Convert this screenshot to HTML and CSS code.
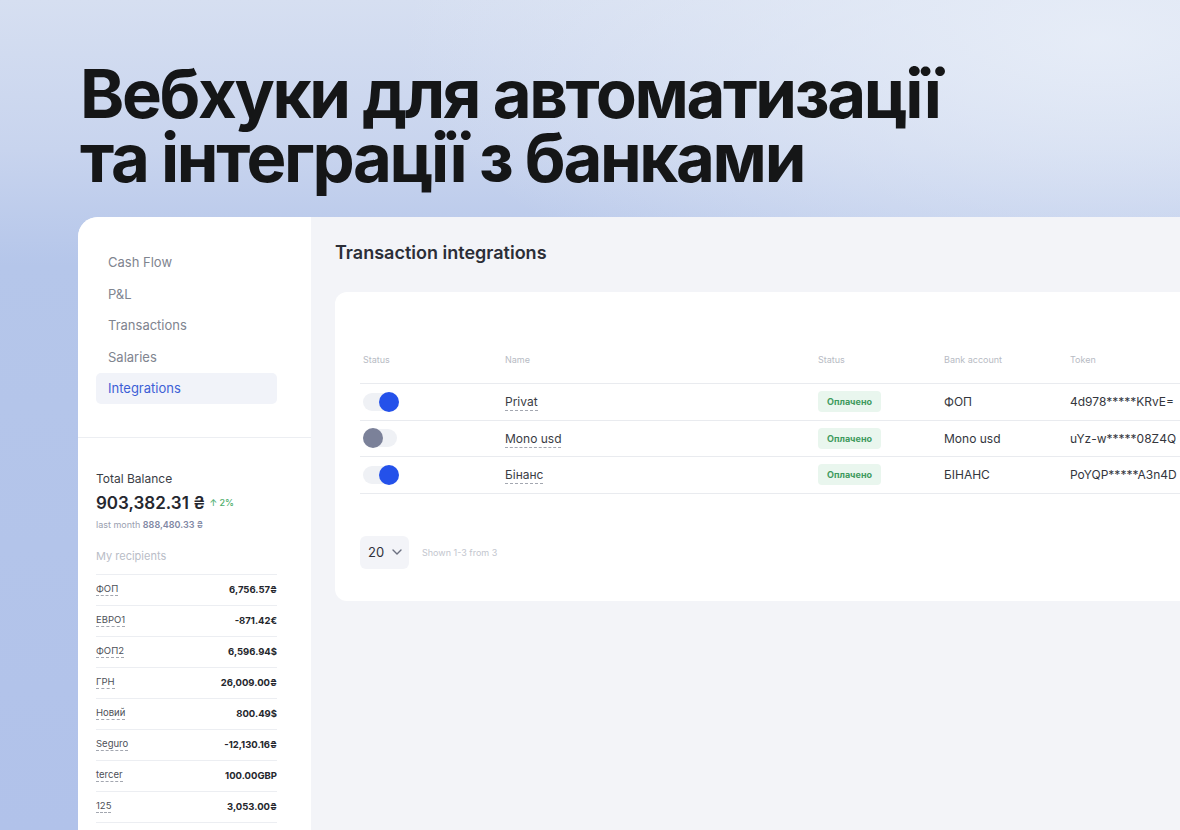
FILE: index.html
```html
<!DOCTYPE html>
<html lang="uk">
<head>
    <meta charset="UTF-8">
    <meta name="viewport" content="width=device-width, initial-scale=1.0">
    <title>Вебхуки</title>
    <link rel="stylesheet" href="styles.css">
</head>
<body>
<h1 class="headline">Вебхуки для автоматизації<br>та інтеграції з банками</h1>

<div class="app">
    <aside class="sidebar">
        <nav class="nav">
            <a class="nav-item">Cash Flow</a>
            <a class="nav-item">P&amp;L</a>
            <a class="nav-item">Transactions</a>
            <a class="nav-item">Salaries</a>
            <a class="nav-item active">Integrations</a>
        </nav>

        <div class="balance">
            <p class="balance-label">Total Balance</p>
            <p class="balance-sum">903,382.31 ₴ <span class="growth">↑ 2%</span></p>
            <p class="balance-prev">last month <b>888,480.33 ₴</b></p>
            <p class="recipients-title">My recipients</p>

            <ul class="recipients">
                <li><span class="dotted">ФОП</span><b>6,756.57₴</b></li>
                <li><span class="dotted">ЕВРО1</span><b>-871.42€</b></li>
                <li><span class="dotted">ФОП2</span><b>6,596.94$</b></li>
                <li><span class="dotted">ГРН</span><b>26,009.00₴</b></li>
                <li><span class="dotted">Новий</span><b>800.49$</b></li>
                <li><span class="dotted">Seguro</span><b>-12,130.16₴</b></li>
                <li><span class="dotted">tercer</span><b>100.00GBP</b></li>
                <li><span class="dotted">125</span><b>3,053.00₴</b></li>
                <li></li>
            </ul>
        </div>
    </aside>

    <main class="main">
        <h2 class="page-title">Transaction integrations</h2>

        <div class="table-card">
            <table class="table">
                <thead>
                <tr>
                    <th class="col-toggle">Status</th>
                    <th class="col-name">Name</th>
                    <th class="col-status">Status</th>
                    <th class="col-bank">Bank account</th>
                    <th>Token</th>
                </tr>
                </thead>
                <tbody>
                <tr>
                    <td><span class="toggle on"></span></td>
                    <td><span class="dotted name">Privat</span></td>
                    <td><span class="badge">Оплачено</span></td>
                    <td>ФОП</td>
                    <td>4d978*****KRvE=</td>
                </tr>
                <tr>
                    <td><span class="toggle"></span></td>
                    <td><span class="dotted name">Mono usd</span></td>
                    <td><span class="badge">Оплачено</span></td>
                    <td>Mono usd</td>
                    <td>uYz-w*****08Z4Q</td>
                </tr>
                <tr>
                    <td><span class="toggle on"></span></td>
                    <td><span class="dotted name">Бінанс</span></td>
                    <td><span class="badge">Оплачено</span></td>
                    <td>БІНАНС</td>
                    <td>PoYQP*****A3n4D</td>
                </tr>
                </tbody>
            </table>

            <div class="pager">
                <div class="per-page">
                    20
                    <svg width="10" height="6" viewBox="0 0 10 6"><path d="M1 1l4 4 4-4" fill="none" stroke="#6b7080" stroke-width="1.4" stroke-linecap="round" stroke-linejoin="round"/></svg>
                </div>
                <span class="shown">Shown 1-3 from 3</span>
            </div>
        </div>
    </main>
</div>
</body>
</html>
```

FILE: styles.css
```css
* {
    box-sizing: border-box;
    margin: 0;
    padding: 0;
}
body {
    font-family: Inter, "Noto Sans", sans-serif;
    height: 830px;
    overflow: hidden;
    color: #333;
    background:
        radial-gradient(ellipse 700px 300px at 1100px 40px, rgba(232, 238, 248, 0.9), rgba(232, 238, 248, 0)),
        linear-gradient(to bottom, #d6dff1 0%, #c8d4ee 18%, #b5c6ea 32%, #b1c2ea 100%);
}
.headline {
    padding: 62px 0 0 80px;
    font-size: 67px;
    line-height: 64px;
    font-weight: 700;
    letter-spacing: -0.035em;
    color: #151617;
}
.app {
    display: flex;
    margin: 27px 0 0 78px;
    height: 700px;
    width: 1140px;
    border-radius: 20px 0 0 0;
    overflow: hidden;
    background-color: #f3f4f8;
}

/* sidebar */
.sidebar {
    width: 233px;
    flex-shrink: 0;
    background-color: #fff;
}
.nav {
    display: flex;
    flex-direction: column;
    padding: 30px 34px 32px 18px;
    border-bottom: 1px solid #eceef2;
}
.nav-item {
    display: block;
    padding: 6px 12px;
    margin-bottom: 0.6px;
    font-size: 13px;
    line-height: 19px;
    color: #80848f;
    border-radius: 5px;
}
.nav-item.active {
    background-color: #f1f3f9;
    color: #3d5fd6;
}
.balance {
    padding: 33px 34px 0 18px;
}
.balance-label {
    font-size: 12px;
    line-height: 15px;
    color: #3a3d45;
}
.balance-sum {
    margin-top: 6px;
    font-size: 17px;
    line-height: 21px;
    font-weight: 600;
    color: #25272e;
}
.growth {
    font-size: 9px;
    font-weight: 500;
    color: #4cae6c;
    vertical-align: 3px;
}
.balance-prev {
    margin-top: 5px;
    font-size: 9px;
    line-height: 11px;
    color: #9aa0b0;
}
.balance-prev b {
    font-weight: 600;
    color: #7f88a4;
}
.recipients-title {
    margin-top: 20px;
    font-size: 11px;
    line-height: 13px;
    color: #b9bdc7;
}
.recipients {
    list-style: none;
    margin-top: 11px;
}
.recipients li {
    display: flex;
    justify-content: space-between;
    align-items: center;
    height: 31px;
    border-top: 1px solid #eceef2;
    font-size: 9.5px;
    color: #4d5058;
}
.recipients b {
    font-weight: 700;
    color: #24262c;
}
.dotted {
    border-bottom: 1px dashed #a3a7b0;
    padding-bottom: 1px;
}

/* main */
.main {
    flex: 1;
    padding: 24px 0 0 24px;
}
.page-title {
    font-size: 18px;
    line-height: 24px;
    font-weight: 600;
    color: #2b2e37;
}
.table-card {
    margin-top: 27px;
    width: 900px;
    height: 309px;
    padding: 50px 0 0 25px;
    background-color: #fff;
    border-radius: 12px;
}
.table {
    width: 875px;
    border-collapse: collapse;
}
.table th {
    text-align: left;
    padding: 12px 0 18px 3px;
    font-size: 9px;
    line-height: 11px;
    font-weight: 400;
    color: #b7bbc4;
    border-bottom: 1px solid #e9ebef;
}
.col-toggle { width: 142px; }
.col-name { width: 313px; }
.col-status { width: 126px; }
.col-bank { width: 126px; }
.table td {
    height: 36.5px;
    padding: 0 0 0 3px;
    font-size: 12px;
    color: #34363d;
    border-bottom: 1px solid #e9ebef;
    vertical-align: middle;
}
.name {
    color: #3a3c44;
}
.toggle {
    position: relative;
    display: block;
    width: 34px;
    height: 18px;
    border-radius: 9px;
    background-color: #eff1f5;
}
.toggle::after {
    content: "";
    position: absolute;
    top: -1px;
    left: 0;
    width: 20px;
    height: 20px;
    border-radius: 50%;
    background-color: #7b8199;
}
.toggle.on::after {
    left: 16px;
    background-color: #2451ea;
}
.badge {
    display: inline-block;
    padding: 5px 9px;
    font-size: 9px;
    font-weight: 700;
    color: #3f9b5e;
    background-color: #e9f6ee;
    border-radius: 4px;
}
.pager {
    display: flex;
    align-items: center;
    gap: 13px;
    margin-top: 42px;
}
.per-page {
    display: flex;
    align-items: center;
    gap: 8px;
    width: 49px;
    height: 33px;
    padding-left: 8px;
    font-size: 13px;
    color: #30323a;
    background-color: #f3f4f8;
    border-radius: 6px;
}
.shown {
    font-size: 9px;
    color: #c3c6ce;
}
```
